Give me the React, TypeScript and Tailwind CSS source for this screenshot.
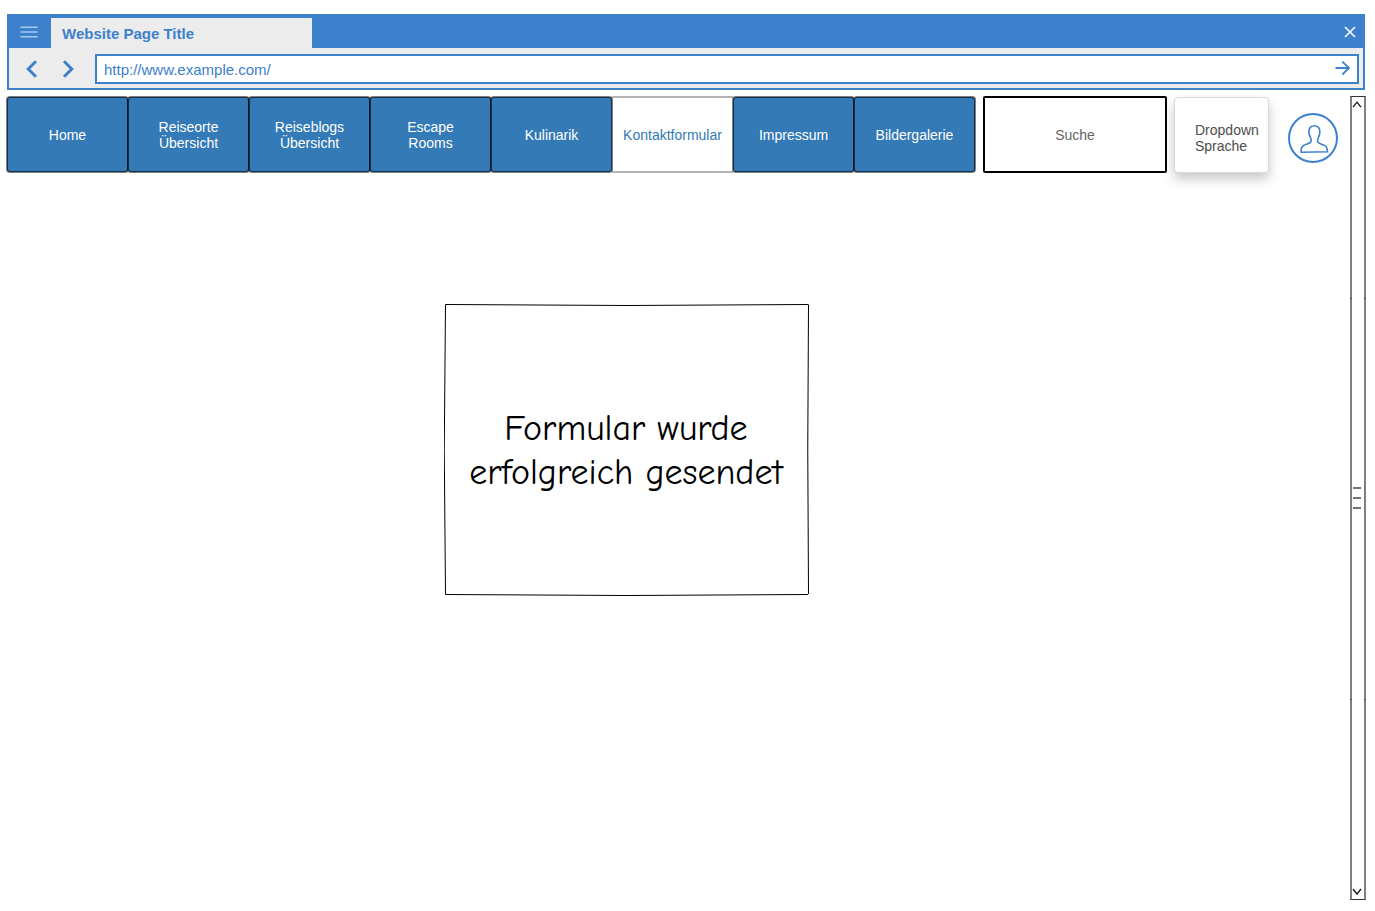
import React from "react";

type NavItem = { label: string; lines: string[]; active?: boolean };

const navItems: NavItem[] = [
  { label: "home", lines: ["Home"] },
  { label: "reiseorte", lines: ["Reiseorte", "Übersicht"] },
  { label: "reiseblogs", lines: ["Reiseblogs", "Übersicht"] },
  { label: "escape-rooms", lines: ["Escape", "Rooms"] },
  { label: "kulinarik", lines: ["Kulinarik"] },
  { label: "kontaktformular", lines: ["Kontaktformular"], active: true },
  { label: "impressum", lines: ["Impressum"] },
  { label: "bildergalerie", lines: ["Bildergalerie"] },
];

function BrowserBar() {
  return (
    <header className="ml-[7px] mr-[10px] border-2 border-[#3d80cc] bg-[#ececec]">
      <div className="flex h-8 items-stretch bg-[#3d80cc]">
        <button type="button" aria-label="Menü" className="flex w-[42px] items-center pl-[11px]">
          <svg width="18" height="12" viewBox="0 0 18 12" stroke="#a9c8ea" strokeWidth="1.6">
            <path d="M0.5 1.3H17.5M0.5 6H17.5M0.5 10.7H17.5" />
          </svg>
        </button>
        <div className="mt-0.5 flex w-[261px] items-center bg-[#ececec] pl-[11px] pt-0.5 text-[15px] font-bold text-[#3d80cc]">
          Website Page Title
        </div>
        <button type="button" aria-label="Schließen" className="ml-auto flex w-[26px] items-center justify-center">
          <svg width="12" height="12" viewBox="0 0 12 12" stroke="#fff" strokeWidth="1.5" fill="none">
            <path d="M1 1L11 11M11 1L1 11" />
          </svg>
        </button>
      </div>
      <div className="flex h-10 items-center pr-1">
        <button type="button" aria-label="Zurück" className="ml-4 mt-0.5 flex h-6 w-3 items-center justify-center">
          <svg width="12" height="18" viewBox="0 0 12 18" stroke="#3d80cc" strokeWidth="3" fill="none">
            <path d="M11 1.2L3.2 9L11 16.8" />
          </svg>
        </button>
        <button type="button" aria-label="Vorwärts" className="ml-[25px] mr-[21px] mt-0.5 flex h-6 w-3 items-center justify-center">
          <svg width="12" height="18" viewBox="0 0 12 18" stroke="#3d80cc" strokeWidth="3" fill="none">
            <path d="M2 1.2L9.8 9L2 16.8" />
          </svg>
        </button>
        <div className="mt-0.5 flex h-[30px] flex-1 items-center border-2 border-[#3d80cc] bg-white">
          <input
            type="text"
            aria-label="Adresse"
            defaultValue="http://www.example.com/"
            className="h-full min-w-0 flex-1 bg-transparent pl-[7px] text-[15px] text-[#3d80cc] outline-none"
          />
          <button type="button" aria-label="Adresse öffnen" className="mr-1.5 flex">
            <svg width="16" height="16" viewBox="0 0 16 16" stroke="#3d80cc" strokeWidth="1.8" fill="none">
              <path d="M0.5 7H14M7.3 0.7L14 7L7.3 13.5" />
            </svg>
          </button>
        </div>
      </div>
    </header>
  );
}

function Navigation() {
  return (
    <nav className="grid h-[75px] flex-1 grid-cols-8">
      {navItems.map((item) => (
        <a
          key={item.label}
          href={`#${item.label}`}
          aria-current={item.active ? "page" : undefined}
          className={
            item.active
              ? "flex flex-col items-center justify-center text-[14px] leading-4 text-[#337ab7] shadow-[inset_0_1px_0_#b3b3b3,inset_0_-1px_0_#b3b3b3,0_-1px_0_#b3b3b3,0_1px_0_#b3b3b3]"
              : "relative flex flex-col items-center justify-center rounded-[3px] border border-black/60 bg-[#337ab7] text-[14px] leading-4 text-white shadow-[0_0_0_1px_rgba(0,0,0,0.5)]"
          }
        >
          {item.lines.map((line) => (
            <span key={line}>{line}</span>
          ))}
        </a>
      ))}
    </nav>
  );
}

function Toolbar() {
  return (
    <div className="flex items-center pr-3">
      <Navigation />
      <input
        type="text"
        aria-label="Suche"
        placeholder="Suche"
        className="ml-2 h-[77px] w-[184px] rounded-[2px] border-2 border-black bg-white text-center text-[14px] text-[#333333] outline-none placeholder:text-[#666666]"
      />
      <label className="relative ml-[7px] flex h-[76px] w-[95px] items-center rounded border border-[#d9d9d9] bg-white pl-5 pt-1.5 text-[14px] leading-4 text-[#4d4d4d] shadow-[0_6px_12px_rgba(0,0,0,0.22)]">
        <span>
          Dropdown
          <br />
          Sprache
        </span>
        <select aria-label="Dropdown Sprache" className="absolute inset-0 h-full w-full cursor-pointer opacity-0">
          <option aria-label="Deutsch" />
        </select>
      </label>
      <button type="button" aria-label="Profil" className="ml-[19px] mt-1.5 flex">
        <svg width="50" height="50" viewBox="0 0 50 50" fill="none" stroke="#3d80cc">
          <circle cx="25" cy="25" r="24" fill="#fff" strokeWidth="2" />
          <path
            strokeWidth="1.6"
            d="M26.3 12.8C23 12.8 20.8 15 20.9 18.5C20.9 20.5 21 21.8 22.2 23.9C23.4 26 23.5 27.5 22.8 29C21.7 30.8 18 31 15.4 32.7C13.3 34.1 12.9 36.5 13.1 39.3L39.5 38.7C39.3 35.5 38.6 33.5 36.6 32.4C34 31 30.7 30.8 29.9 29.2C29.2 27.5 29.8 25.6 30.7 23.9C31.8 21.8 31.9 20.3 31.8 18.2C31.6 14.8 29.6 12.8 26.3 12.8Z"
          />
        </svg>
      </button>
    </div>
  );
}

function ScrollBar() {
  return (
    <div
      aria-hidden="true"
      className="relative flex w-4 flex-col items-start justify-between border-x-2 border-y border-x-[#808080] border-y-[#333333] py-1"
    >
      <svg width="10" height="8" viewBox="0 0 10 8" fill="none" stroke="#111" strokeWidth="1.3">
        <path d="M1 6.2L5 1.2L9 6.2" />
      </svg>
      <div className="flex w-full flex-col gap-2 pl-px">
        <span className="h-0.5 w-2 bg-[#737373]" />
        <span className="h-0.5 w-2 bg-[#737373]" />
        <span className="h-0.5 w-2 bg-[#737373]" />
      </div>
      <svg width="10" height="8" viewBox="0 0 10 8" fill="none" stroke="#111" strokeWidth="1.3">
        <path d="M1 2L5 7L9 2" />
      </svg>
      <span className="absolute -inset-x-0.5 top-1/4 h-px border-x-2 border-[#4d4d4d]" />
      <span className="absolute -inset-x-0.5 top-3/4 h-px border-x-2 border-[#4d4d4d]" />
    </div>
  );
}

function ConfirmationBox() {
  return (
    <section className="relative ml-[437px] mt-[130px] flex h-[293px] w-[366px] items-center justify-center">
      <svg
        aria-hidden="true"
        className="absolute inset-0 h-full w-full"
        viewBox="0 0 366 293"
        preserveAspectRatio="none"
        fill="none"
        stroke="#000"
        strokeWidth="1"
      >
        <path d="M1.5 1.5Q183 3.5 364.5 1.5M364.5 2Q363 146 364.5 291M364 291.5Q183 293.5 1.5 291.5M1.5 291.5Q-1 146 1.5 1.5" />
      </svg>
      <p
        className="relative pr-0.5 pt-0.5 text-center text-[36px] leading-[44px] text-black"
        style={{ fontFamily: '"Comic Sans MS", "Comic Neue", "Open Sans", sans-serif' }}
      >
        Formular wurde
        <br />
        erfolgreich gesendet
      </p>
    </section>
  );
}

export default function App() {
  return (
    <div className="flex min-h-screen flex-col bg-white pb-[11px] pt-[14px] font-['Liberation_Sans',Arial,sans-serif]">
      <BrowserBar />
      <div className="ml-[7px] mr-[9px] mt-1.5 flex flex-1 items-stretch">
        <main className="min-w-0 flex-1">
          <Toolbar />
          <ConfirmationBox />
        </main>
        <ScrollBar />
      </div>
    </div>
  );
}
